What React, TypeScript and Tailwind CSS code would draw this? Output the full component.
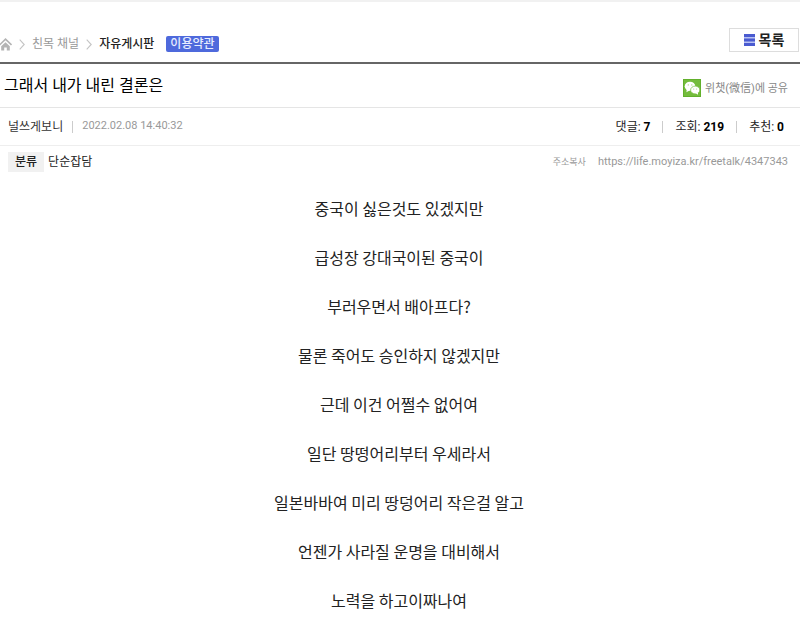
import React from "react";

const lines = [
  "중국이 싫은것도 있겠지만",
  "급성장 강대국이된 중국이",
  "부러우면서 배아프다?",
  "물론 죽어도 승인하지 않겠지만",
  "근데 이건 어쩔수 없어여",
  "일단 땅떵어리부터 우세라서",
  "일본바바여 미리 땅덩어리 작은걸 알고",
  "언젠가 사라질 운명을 대비해서",
  "노력을 하고이짜나여",
];

const stats = [
  { label: "댓글", value: 7 },
  { label: "조회", value: 219 },
  { label: "추천", value: 0 },
];

const HomeIcon = () => (
  <svg width="12" height="13" viewBox="0 0 12 13" fill="none" stroke="#b4b4b4">
    <path d="M-0.5 7 L5.5 1.2 L11.5 7" strokeWidth="1.6" />
    <path
      d="M1.2 8.2 L5.5 4.2 L9.8 8.2 V12.5 H6.8 V9.5 H4.2 V12.5 H1.2 Z"
      fill="#b4b4b4"
      stroke="none"
    />
  </svg>
);

const Arrow = () => (
  <svg
    className="mx-[7px]"
    width="6"
    height="11"
    viewBox="0 0 6 11"
    fill="none"
    stroke="#c4c4c4"
  >
    <path d="M0.7 0.7 L5.2 5.5 L0.7 10.3" strokeWidth="1.1" />
  </svg>
);

const WechatIcon = () => (
  <svg width="18" height="18" viewBox="0 0 18 18">
    <rect width="18" height="18" fill="#62b02c" />
    <rect x="1" y="1" width="16" height="16" fill="#74bc3c" />
    <ellipse cx="7" cy="7.2" rx="5.3" ry="4.5" fill="#fff" />
    <path d="M3.8 10 L3.4 13.2 L7 11.3 Z" fill="#fff" />
    <ellipse cx="12.2" cy="11" rx="4.6" ry="3.9" fill="#fff" stroke="#74bc3c" strokeWidth="0.7" />
    <path d="M12.8 14.2 L15 15.8 L15 13.5 Z" fill="#fff" />
    <g fill="#a9d684">
      <circle cx="5.3" cy="5.9" r="0.7" />
      <circle cx="8.8" cy="5.9" r="0.7" />
      <circle cx="10.7" cy="10" r="0.6" />
      <circle cx="13.6" cy="10" r="0.6" />
    </g>
  </svg>
);

const ListIcon = () => (
  <svg width="11" height="12" viewBox="0 0 11 12" fill="#4a5bd0">
    <rect width="11" height="12" fill="#b9c2f3" />
    <rect width="11" height="3" />
    <rect y="4.5" width="11" height="3" />
    <rect y="9" width="11" height="3" />
  </svg>
);

const App = () => {
  return (
    <div className="min-h-screen bg-white border-t-2 border-[#f1f1f1] font-[Roboto,'Noto_Sans_CJK_KR',sans-serif] text-[#222]">
      {/* Breadcrumb */}
      <header className="flex items-end justify-between h-[62px] border-b-2 border-[#666] pb-[10px]">
        <nav className="flex items-center h-4 text-xs">
          <a href="#" aria-label="홈">
            <HomeIcon />
          </a>
          <Arrow />
          <a href="#" className="text-[#999]">
            친목 채널
          </a>
          <Arrow />
          <a href="#" className="text-[#222] font-medium">
            자유게시판
          </a>
          <a
            href="#"
            className="ml-3 px-1 h-4 leading-4 rounded-xs bg-[#4e69dc] text-[#e8edff] font-medium"
          >
            이용약관
          </a>
        </nav>
        <button className="flex items-center justify-center gap-1 w-[70px] h-6 mr-px border border-[#ddd] text-sm font-bold">
          <ListIcon />
          목록
        </button>
      </header>

      {/* Title */}
      <div className="flex items-center justify-between h-11 pl-1 pr-3 border-b border-[#e5e5e5]">
        <h1 className="text-base text-black">그래서 내가 내린 결론은</h1>
        <button className="flex items-center gap-1 pt-1 text-[11px] text-[#888]">
          <WechatIcon />
          <span className="pt-1">위챗(微信)에 공유</span>
        </button>
      </div>

      {/* Author and counters */}
      <div className="flex items-center justify-between h-[38px] pl-2 pr-4 border-b border-[#eee] text-xs">
        <div className="flex items-center">
          <a href="#" className="text-[#333]">
            널쓰게보니
          </a>
          <span className="w-px h-3 mx-[9px] bg-[#ccc]" />
          <time className="text-[11px] text-[#999]">2022.02.08 14:40:32</time>
        </div>
        <ul className="flex items-center">
          {stats.map((stat) => (
            <li
              key={stat.label}
              className="pl-3 ml-3 border-l border-[#ccc] leading-3 first:border-l-0"
            >
              {stat.label}: <b className="text-black">{stat.value}</b>
            </li>
          ))}
        </ul>
      </div>

      {/* Category and address */}
      <div className="flex items-center justify-between h-8 pl-2 pr-3 text-xs">
        <div className="flex items-center gap-1">
          <span className="px-[7px] h-5 leading-5 bg-[#f1f1f1] font-medium">분류</span>
          <span>단순잡담</span>
        </div>
        <div className="flex items-center gap-3 text-[#999]">
          <button className="text-[9px]">주소복사</button>
          <a href="#" className="text-[11px]">
            https://life.moyiza.kr/freetalk/4347343
          </a>
        </div>
      </div>

      <article className="pt-[6px] pr-[2px] text-center text-base font-['Noto_Sans_CJK_KR',sans-serif]">
        {lines.map((line) => (
          <p key={line} className="h-[49px] leading-[49px]">
            {line}
          </p>
        ))}
      </article>
    </div>
  );
};

export default App;
